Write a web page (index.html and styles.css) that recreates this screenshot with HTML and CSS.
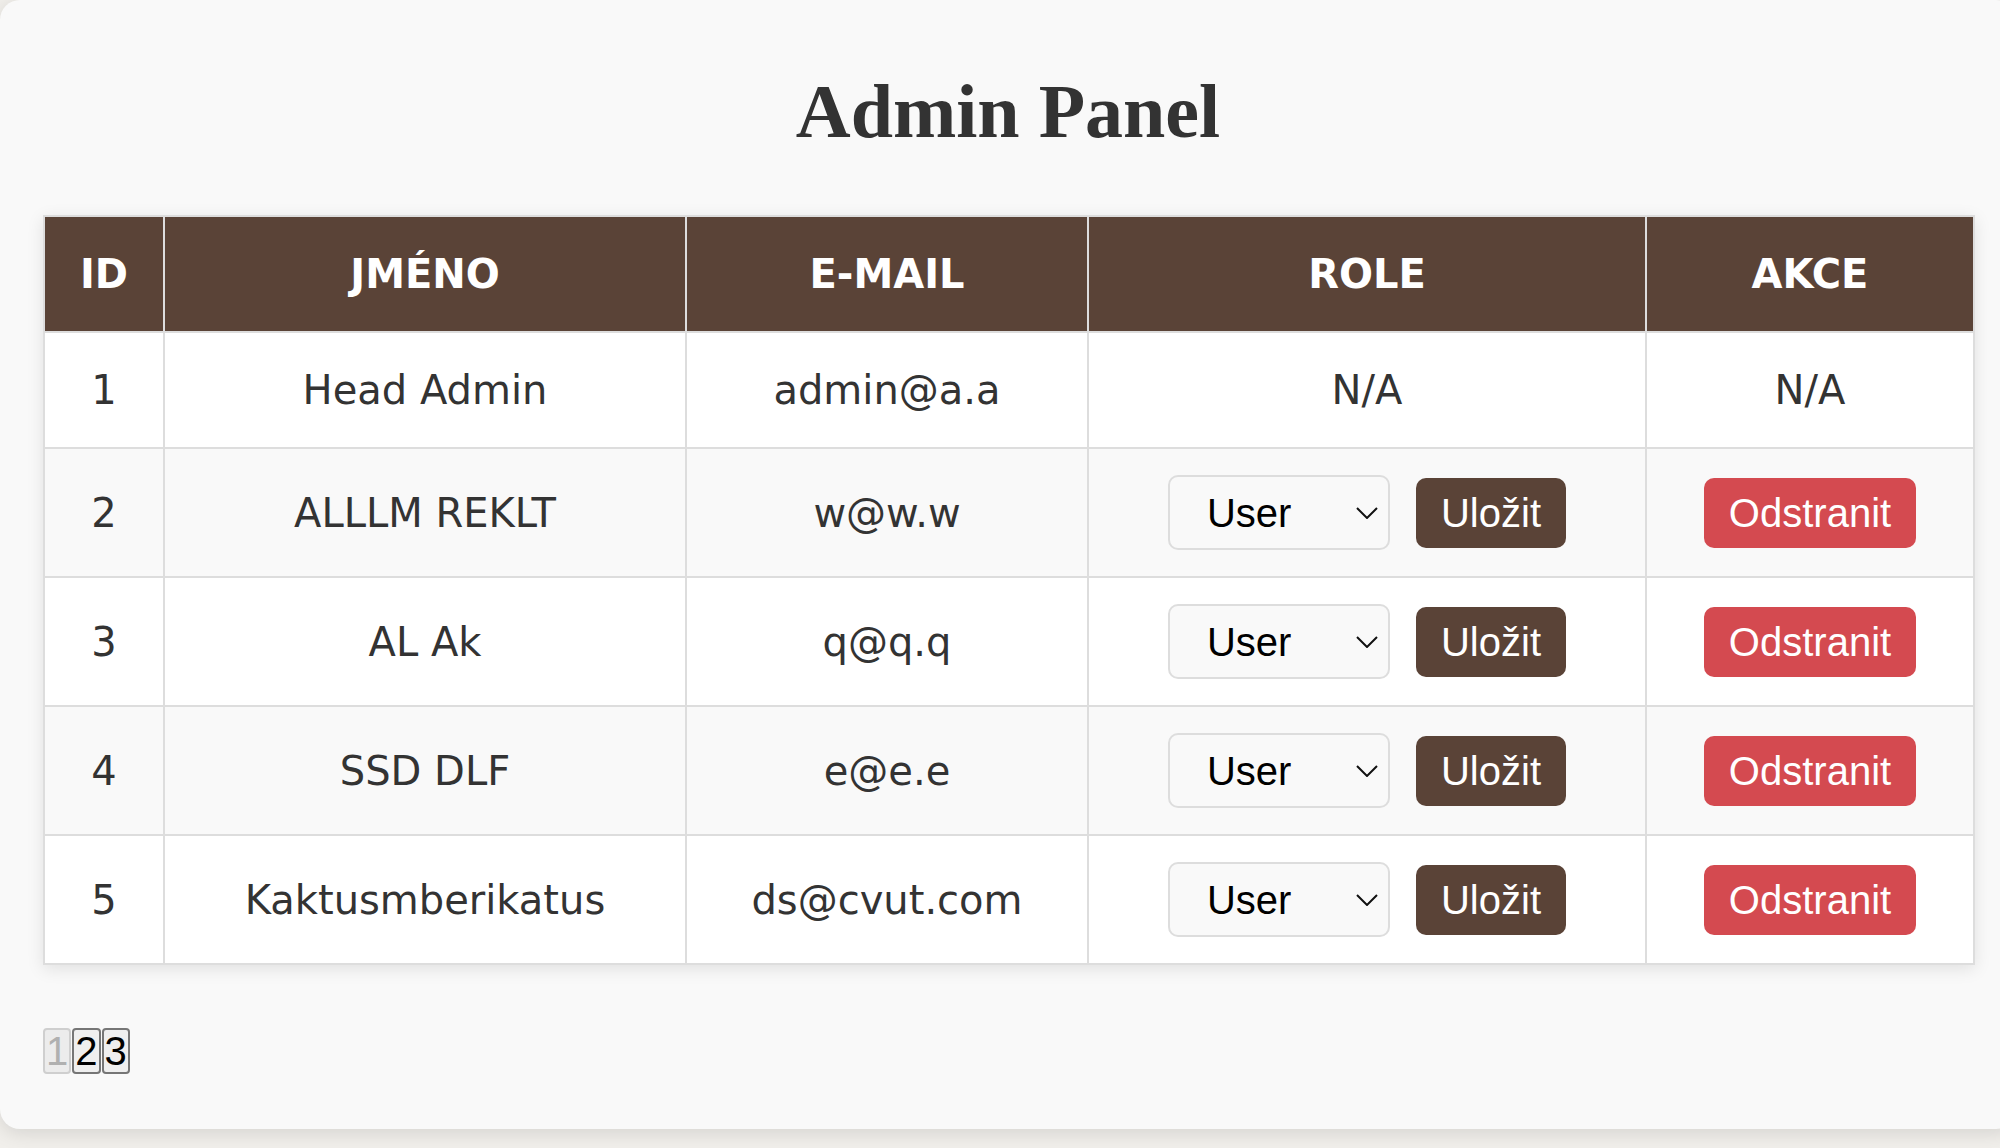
FILE: index.html
```html
<!DOCTYPE html>
<html lang="cs">
<head>
<meta charset="utf-8">
<title>Admin Panel</title>
<link rel="stylesheet" href="styles.css">
</head>
<body>
<div class="panel">
  <h1 class="title">Admin Panel</h1>
  <table class="users">
    <colgroup>
      <col class="c-id"><col class="c-name"><col class="c-mail"><col class="c-role"><col class="c-act">
    </colgroup>
    <thead>
      <tr><th>ID</th><th>Jméno</th><th>E-mail</th><th>Role</th><th>Akce</th></tr>
    </thead>
    <tbody>
      <tr><td>1</td><td>Head Admin</td><td>admin@a.a</td><td>N/A</td><td>N/A</td></tr>
      <tr><td>2</td><td>ALLLM REKLT</td><td>w@w.w</td>
        <td><div class="role-ctl"><span class="sel-wrap"><select class="role-sel"><option>User</option><option>Admin</option></select><svg class="chev" viewBox="0 0 22 12" width="22" height="12"><path d="M1 1 L11 11 L21 1" fill="none" stroke="#111" stroke-width="2"/></svg></span><button class="btn btn-save">Uložit</button></div></td>
        <td><div class="act-ctl"><button class="btn btn-del">Odstranit</button></div></td></tr>
      <tr><td>3</td><td>AL Ak</td><td>q@q.q</td>
        <td><div class="role-ctl"><span class="sel-wrap"><select class="role-sel"><option>User</option><option>Admin</option></select><svg class="chev" viewBox="0 0 22 12" width="22" height="12"><path d="M1 1 L11 11 L21 1" fill="none" stroke="#111" stroke-width="2"/></svg></span><button class="btn btn-save">Uložit</button></div></td>
        <td><div class="act-ctl"><button class="btn btn-del">Odstranit</button></div></td></tr>
      <tr><td>4</td><td>SSD DLF</td><td>e@e.e</td>
        <td><div class="role-ctl"><span class="sel-wrap"><select class="role-sel"><option>User</option><option>Admin</option></select><svg class="chev" viewBox="0 0 22 12" width="22" height="12"><path d="M1 1 L11 11 L21 1" fill="none" stroke="#111" stroke-width="2"/></svg></span><button class="btn btn-save">Uložit</button></div></td>
        <td><div class="act-ctl"><button class="btn btn-del">Odstranit</button></div></td></tr>
      <tr><td>5</td><td>Kaktusmberikatus</td><td>ds@cvut.com</td>
        <td><div class="role-ctl"><span class="sel-wrap"><select class="role-sel"><option>User</option><option>Admin</option></select><svg class="chev" viewBox="0 0 22 12" width="22" height="12"><path d="M1 1 L11 11 L21 1" fill="none" stroke="#111" stroke-width="2"/></svg></span><button class="btn btn-save">Uložit</button></div></td>
        <td><div class="act-ctl"><button class="btn btn-del">Odstranit</button></div></td></tr>
    </tbody>
  </table>
  <div class="pager"><button class="pg" disabled>1</button><button class="pg">2</button><button class="pg">3</button></div>
</div>
</body>
</html>
```
FILE: styles.css
```css
html, body {
  margin: 0;
  padding: 0;
}
body {
  background: #f1efeb;
  overflow: hidden;
  height: 1148px;
  font-family: "DejaVu Sans", sans-serif;
  color: #333;
}
.panel {
  box-sizing: border-box;
  width: calc(100% + 16px);
  background: #f9f9f9;
  border-radius: 20px;
  box-shadow: 0 4px 20px rgba(0, 0, 0, 0.12);
  padding: 66px 43px 55px;
}
.title {
  margin: 0 0 58px;
  font-family: "Liberation Serif", "Times New Roman", serif;
  font-weight: 700;
  font-size: 76px;
  line-height: 91px;
  text-align: center;
  color: #333;
}
.users {
  width: 1930px;
  table-layout: fixed;
  border-collapse: collapse;
  background: #fff;
  box-shadow: 0 4px 16px rgba(0, 0, 0, 0.1);
  font-size: 40px;
}
.c-id { width: 120px; }
.c-name { width: 522px; }
.c-mail { width: 402px; }
.c-role { width: 558px; }
.c-act { width: 328px; }
.users th, .users td {
  border: 2px solid #ddd;
  padding: 26px 10px;
  text-align: center;
  line-height: 62px;
}
.users th {
  background: #5a4337;
  color: #fff;
  font-weight: 700;
  text-transform: uppercase;
  line-height: 62px;
}
.users tbody tr:nth-child(even) td {
  background: #f9f9f9;
}
.role-ctl, .act-ctl {
  display: flex;
  justify-content: center;
  align-items: center;
  gap: 26px;
  height: 75px;
}
.sel-wrap {
  position: relative;
  display: block;
  width: 222px;
  height: 75px;
}
.role-sel {
  -webkit-appearance: none;
  appearance: none;
  box-sizing: border-box;
  width: 222px;
  height: 75px;
  margin: 0;
  padding: 0 40px 0 37px;
  border: 2px solid #ddd;
  border-radius: 10px;
  background-color: #f9f9f9;
  color: #000;
  font-family: "Liberation Sans", Arial, sans-serif;
  font-size: 40px;
}
.chev {
  position: absolute;
  right: 12px;
  top: 32px;
  pointer-events: none;
}
.btn {
  border: none;
  border-radius: 10px;
  padding: 12px 25px;
  color: #fff;
  font-family: "Liberation Sans", Arial, sans-serif;
  font-size: 40px;
  line-height: 46px;
  cursor: pointer;
}
.btn-save { background: #5a4337; }
.btn-del { background: #d44a50; }
.pager {
  display: flex;
  gap: 1px;
  margin-top: 63px;
}
.pg {
  box-sizing: border-box;
  height: 46px;
  padding: 0 1px;
  border: 2px solid #767676;
  border-radius: 4px;
  background: #efefef;
  color: #000;
  font-family: "Liberation Sans", Arial, sans-serif;
  font-size: 40px;
  line-height: 42px;
}
.pg:disabled {
  border-color: #cfcfcf;
  background: #ececec;
  color: #b0b0b0;
}
```
